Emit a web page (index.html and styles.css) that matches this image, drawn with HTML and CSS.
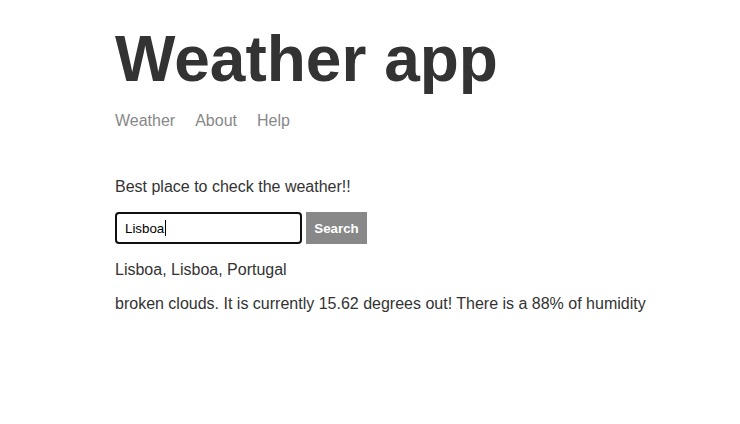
FILE: index.html
```html
<!DOCTYPE html>
<html>
<head>
<meta charset="utf-8">
<title>Weather</title>
<link rel="stylesheet" href="styles.css">
</head>
<body>
<div class="main-content">
  <header class="header">
    <h1 class="title">Weather app</h1>
    <nav class="nav">
      <a href="#" class="nav-link">Weather</a>
      <a href="#" class="nav-link">About</a>
      <a href="#" class="nav-link">Help</a>
    </nav>
  </header>
  <p class="lead">Best place to check the weather!!</p>
  <form class="search-form">
    <div class="search-input"><span>Lisboa</span><span class="caret"></span></div>
    <button type="button" class="search-btn">Search</button>
  </form>
  <p class="msg">Lisboa, Lisboa, Portugal</p>
  <p class="msg">broken clouds. It is currently 15.62 degrees out! There is a 88% of humidity</p>
</div>
</body>
</html>
```
FILE: styles.css
```css
html, body {
  margin: 0;
  padding: 0;
  background: #fff;
}
body {
  color: #333;
  font-family: "Liberation Sans", Arial, sans-serif;
  font-size: 16px;
}
.main-content {
  padding: 22px 16px 0 115px;
}
.title {
  font-size: 64px;
  font-weight: bold;
  margin: 0 0 16px;
  line-height: 74px;
}
.nav {
  display: flex;
  gap: 20px;
}
.nav-link {
  color: #888;
  text-decoration: none;
}
.header {
  margin-bottom: 48px;
}
.lead {
  margin: 0 0 16px;
}
.search-form {
  display: flex;
  gap: 4px;
  margin-bottom: 17px;
}
.search-input {
  box-sizing: border-box;
  width: 187px;
  height: 32px;
  border: 2px solid #101010;
  border-radius: 4px;
  padding: 0 8px;
  display: flex;
  align-items: center;
  font-size: 13.33px;
  color: #000;
}
.caret {
  display: inline-block;
  width: 1px;
  height: 16px;
  background: #000;
  margin-left: 1px;
}
.search-btn {
  box-sizing: border-box;
  height: 32px;
  width: 61px;
  border: 1px solid #888;
  background: #888;
  color: #fff;
  font-family: "Liberation Sans", Arial, sans-serif;
  font-weight: bold;
  font-size: 13.33px;
  padding: 0;
}
.msg {
  margin: 0 0 16px;
}
```
